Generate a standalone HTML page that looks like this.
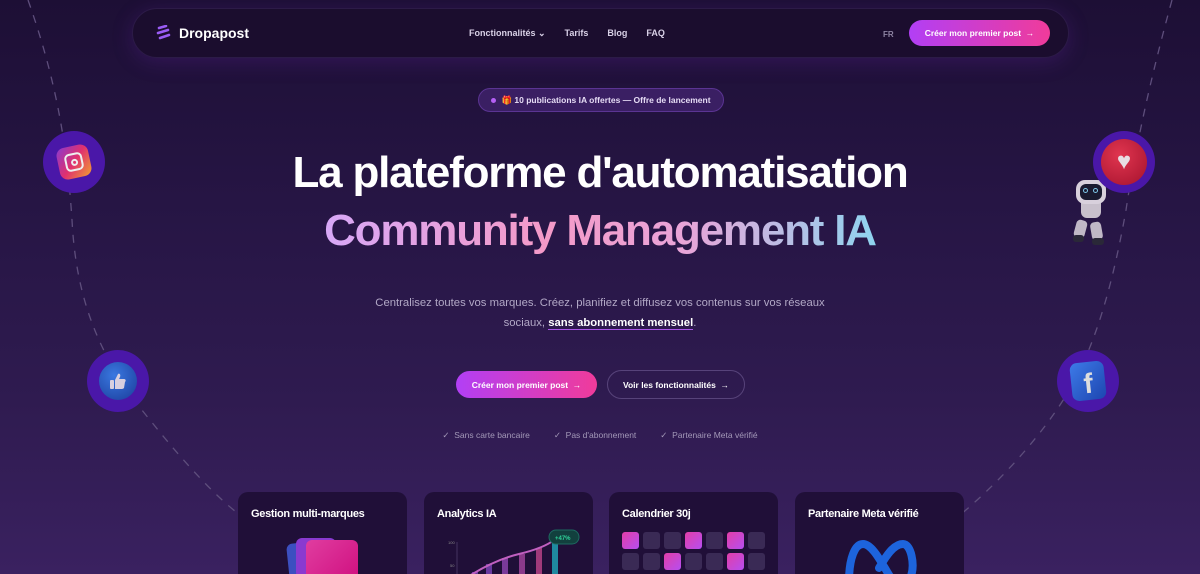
<!DOCTYPE html>
<html><head><meta charset="utf-8"><style>
*{margin:0;padding:0;box-sizing:border-box}
html,body{width:1200px;height:574px;overflow:hidden}
body{font-family:"Liberation Sans",sans-serif;background:linear-gradient(180deg,#1d0f35 0%,#261544 35%,#2f1b50 70%,#3a2160 100%);color:#fff;position:relative}
.nav{position:absolute;left:132px;top:8px;width:937px;height:50px;border-radius:25px;background:#1b0d2e;border:1px solid #2c1b47;box-shadow:0 4px 20px rgba(110,40,180,.25)}
.logo{position:absolute;left:22px;top:16px;font-size:14px;font-weight:bold;display:flex;align-items:center;gap:6px}
.links{position:absolute;left:336px;top:19px;font-size:9px;font-weight:bold;color:#d8d0e6;display:flex;gap:19px}
.fr{position:absolute;left:750px;top:21px;font-size:8px;color:#8e84a3;font-weight:bold}
.btn{background:linear-gradient(90deg,#b23ff5,#f03b9a);border-radius:14px;font-weight:bold;color:#fff;display:flex;align-items:center;justify-content:center}
.badge{position:absolute;left:478px;top:88px;width:246px;height:24px;border-radius:12px;background:#3a1f63;border:1px solid #5b3493;font-size:8.5px;font-weight:bold;color:#e6dcf5;display:flex;align-items:center;justify-content:center;gap:5px}
h1{position:absolute;left:0;width:1200px;text-align:center;font-size:44px;font-weight:bold;letter-spacing:-1.2px}
.sub{position:absolute;left:370px;width:460px;top:293px;text-align:center;font-size:11.3px;line-height:20px;color:#b2a8c6}
.sub b{color:#fff;border-bottom:1px solid #a856e8}
.checks{position:absolute;top:430px;left:0;width:1200px;display:flex;justify-content:center;gap:24px;font-size:8.5px;color:#a398b8}
.card{position:absolute;top:492px;width:169px;height:82px;border-radius:10px 10px 0 0;background:#200f38;overflow:hidden}
.card h3{position:absolute;left:13px;top:16px;font-size:11px;font-weight:bold;letter-spacing:-.3px}
.bub{position:absolute;width:62px;height:62px;border-radius:50%;background:#4a17a8;display:flex;align-items:center;justify-content:center}
.cal{position:absolute;width:17px;height:17px;border-radius:3px;background:#3a2a55}
.cal.p{background:linear-gradient(135deg,#e23ea8,#b64ef0)}
</style></head><body>
<svg width="1200" height="574" style="position:absolute;left:0;top:0"><path d="M28 0 C60 90 68 160 72 220 C76 300 100 360 150 420 C190 470 220 500 240 515" fill="none" stroke="#5e4e7c" stroke-width="1.3" stroke-dasharray="8 8"/><path d="M1172 0 C1150 80 1135 150 1126 210 C1110 300 1090 360 1060 405 C1030 450 990 490 960 515" fill="none" stroke="#5e4e7c" stroke-width="1.3" stroke-dasharray="8 8"/></svg>
<div class="nav">
<div class="logo"><svg width="18" height="16" viewBox="0 0 18 16"><path d="M4 3 L11 1 M3 8 L13 5 M5 13 L14 10" stroke="#9a5cf5" stroke-width="2.6" stroke-linecap="round"/></svg>Dropapost</div>
<div class="links"><span>Fonctionnalités ⌄</span><span>Tarifs</span><span>Blog</span><span>FAQ</span></div>
<div class="fr">FR</div>
<div class="btn" style="position:absolute;left:776px;top:11px;width:141px;height:26px;font-size:8.5px">Créer mon premier post&nbsp;&nbsp;→</div>
</div>
<div class="badge"><span style="width:5px;height:5px;border-radius:50%;background:#b560f5;display:inline-block"></span>🎁 10 publications IA offertes — Offre de lancement</div>
<h1 style="top:148px">La plateforme d'automatisation</h1>
<h1 style="top:206px"><span style="background:linear-gradient(90deg,#d7a8f7 0%,#f49ac8 40%,#e9a4d8 65%,#8fd4ef 100%);-webkit-background-clip:text;background-clip:text;color:transparent">Community Management IA</span></h1>
<div class="sub">Centralisez toutes vos marques. Créez, planifiez et diffusez vos contenus sur vos réseaux<br>sociaux, <b>sans abonnement mensuel</b>.</div>
<div class="btn" style="position:absolute;left:456px;top:371px;width:141px;height:27px;font-size:8.5px">Créer mon premier post&nbsp;&nbsp;→</div>
<div style="position:absolute;left:607px;top:370px;width:138px;height:29px;border-radius:15px;border:1px solid #57437a;font-size:8.5px;font-weight:bold;display:flex;align-items:center;justify-content:center">Voir les fonctionnalités&nbsp;&nbsp;→</div>
<div class="checks"><span>✓&nbsp; Sans carte bancaire</span><span>✓&nbsp; Pas d'abonnement</span><span>✓&nbsp; Partenaire Meta vérifié</span></div>
<div class="bub" style="left:43px;top:131px"><div style="width:32px;height:32px;border-radius:8px;background:linear-gradient(135deg,#8a3ad0,#e0306f,#f2a030);transform:rotate(-12deg);display:flex;align-items:center;justify-content:center"><div style="width:18px;height:18px;border:2.5px solid #eee;border-radius:5px;display:flex;align-items:center;justify-content:center"><div style="width:7px;height:7px;border:2px solid #eee;border-radius:50%"></div></div></div></div>
<div class="bub" style="left:87px;top:350px"><div style="width:38px;height:38px;border-radius:50%;background:radial-gradient(circle at 40% 35%,#3a78e0,#1a3c9a);display:flex;align-items:center;justify-content:center"><svg width="20" height="20" viewBox="0 0 20 20"><rect x="2" y="9" width="4" height="9" rx="1" fill="#d8d0e0"/><path d="M7 9 L10 3 C11 2 13 3 12 6 L11 8 L16 8 C18 8 18 10 17 11 L16 17 C15 18 14 18 13 18 L7 18 Z" fill="#d8d0e0"/></svg></div></div>
<div style="position:absolute;left:1073px;top:180px;width:40px;height:72px">
<div style="position:absolute;left:8px;top:16px;width:20px;height:22px;border-radius:6px;background:#c8c0cc"></div>
<div style="position:absolute;left:3px;top:0;width:30px;height:24px;border-radius:9px;background:#d8d0dc"></div>
<div style="position:absolute;left:7px;top:4px;width:22px;height:16px;border-radius:6px;background:#1a1b30"></div>
<div style="position:absolute;left:10px;top:8px;width:5px;height:5px;border-radius:50%;border:1px solid #7fc8e8"></div>
<div style="position:absolute;left:20px;top:8px;width:5px;height:5px;border-radius:50%;border:1px solid #7fc8e8"></div>
<div style="position:absolute;left:2px;top:40px;width:11px;height:18px;border-radius:4px;background:#c0b8c6;transform:rotate(15deg)"></div>
<div style="position:absolute;left:18px;top:42px;width:11px;height:18px;border-radius:4px;background:#c0b8c6;transform:rotate(-10deg)"></div>
<div style="position:absolute;left:0;top:55px;width:11px;height:7px;border-radius:3px;background:#2a2838"></div>
<div style="position:absolute;left:19px;top:58px;width:12px;height:7px;border-radius:3px;background:#2a2838"></div>
</div>
<div class="bub" style="left:1093px;top:131px"><div style="width:46px;height:46px;border-radius:50%;background:radial-gradient(circle at 40% 35%,#e0354f,#a5122d);color:#e8dde3;font-size:24px;display:flex;align-items:center;justify-content:center">♥</div></div>
<div class="bub" style="left:1057px;top:350px"><div style="width:34px;height:38px;border-radius:7px;background:linear-gradient(135deg,#3d7ae8,#1d46b0);color:#ddd;font-size:28px;font-weight:bold;display:flex;align-items:flex-end;justify-content:center;transform:rotate(-6deg)">f</div></div>
<div class="card" style="left:238px"><h3>Gestion multi-marques</h3>
<div style="position:absolute;left:50px;top:50px;width:40px;height:40px;border-radius:6px;background:#3c4fc0;transform:rotate(-6deg)"></div>
<div style="position:absolute;left:58px;top:46px;width:40px;height:40px;border-radius:6px;background:#8a3ad0"></div>
<div style="position:absolute;left:68px;top:48px;width:52px;height:40px;border-radius:6px;background:linear-gradient(135deg,#e03da0,#d01080)"></div></div>
<div class="card" style="left:424px"><h3>Analytics IA</h3>
<svg width="169" height="90" style="position:absolute;left:0;top:0"><line x1="33" y1="50" x2="33" y2="90" stroke="#443360"/><text x="24" y="52" font-size="4" fill="#888">100</text><text x="26" y="75" font-size="4" fill="#888">50</text>
<rect x="48" y="80" width="6" height="10" fill="#6b3aa0"/><rect x="62" y="72" width="6" height="18" fill="#6b3aa0"/><rect x="78" y="66" width="6" height="24" fill="#7a3a9a"/><rect x="95" y="62" width="6" height="28" fill="#8a3a8a"/><rect x="112" y="56" width="6" height="34" fill="#a03a7a"/><rect x="128" y="50" width="6" height="40" fill="#1f8aa0"/>
<path d="M42 86 Q70 68 95 62 T130 48" stroke="#c060c0" stroke-width="2" fill="none"/>
<rect x="125" y="38" width="30" height="14" rx="7" fill="#12403e" stroke="#1d6a60"/><text x="131" y="48" font-size="6" fill="#2fd39a" font-weight="bold">+47%</text></svg></div>
<div class="card" style="left:609px"><h3>Calendrier 30j</h3>
<div class="cal p" style="left:13px;top:40px"></div><div class="cal" style="left:34px;top:40px"></div><div class="cal" style="left:55px;top:40px"></div><div class="cal p" style="left:76px;top:40px"></div><div class="cal" style="left:97px;top:40px"></div><div class="cal p" style="left:118px;top:40px"></div><div class="cal" style="left:139px;top:40px"></div>
<div class="cal" style="left:13px;top:61px"></div><div class="cal" style="left:34px;top:61px"></div><div class="cal p" style="left:55px;top:61px"></div><div class="cal" style="left:76px;top:61px"></div><div class="cal" style="left:97px;top:61px"></div><div class="cal p" style="left:118px;top:61px"></div><div class="cal" style="left:139px;top:61px"></div></div>
<div class="card" style="left:795px"><h3>Partenaire Meta vérifié</h3>
<svg width="169" height="90" style="position:absolute;left:0;top:0"><path d="M54 90 C54 66 60 52 68 52 C78 52 88 74 96 86 C102 94 112 94 116 84 C120 72 116 52 108 52 C98 52 90 66 84 76" stroke="#1d64dc" stroke-width="8" fill="none" stroke-linecap="round"/></svg></div>
</body></html>
